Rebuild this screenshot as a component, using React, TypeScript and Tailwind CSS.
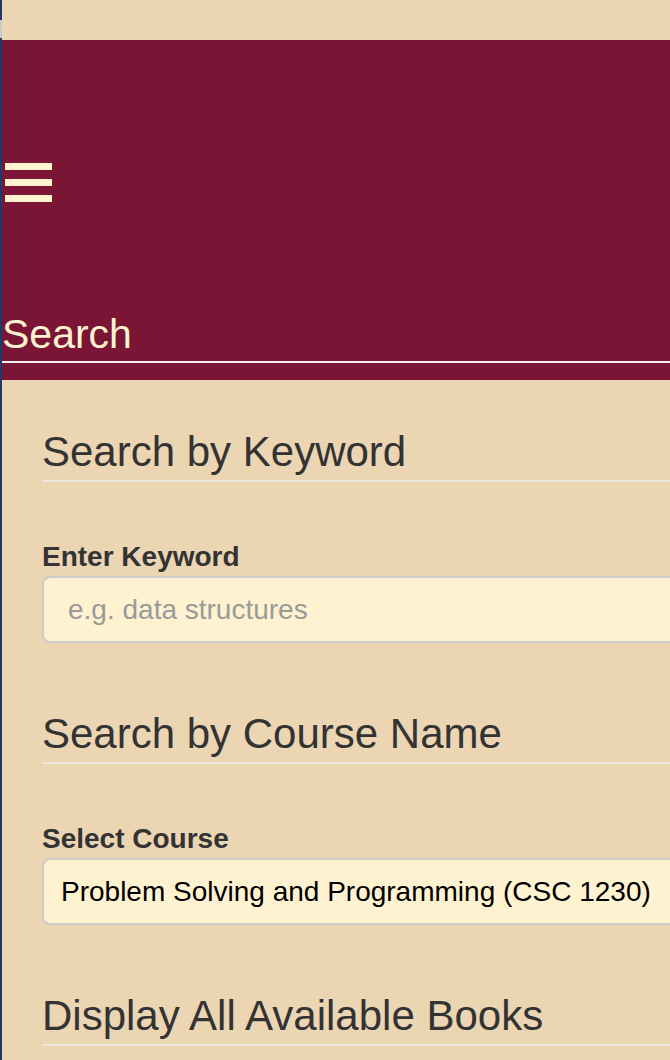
import React from 'react';

const sans = { fontFamily: '"Liberation Sans", Arial, Helvetica, sans-serif' };

function SectionHeading({ children }: { children: React.ReactNode }) {
  return (
    <h1 className="text-[42px] leading-[48px] font-normal text-[#333333] pb-[4px] border-b-2 border-[#ece5da]">
      {children}
    </h1>
  );
}

function FieldLabel({ children }: { children: React.ReactNode }) {
  return (
    <label className="block mt-[57px] mb-[1px] text-[28px] leading-[36px] font-bold text-[#333333]">
      {children}
    </label>
  );
}

export default function App() {
  return (
    <div className="w-[670px] h-[1060px] overflow-hidden flex bg-[#ebd5b3]" style={sans}>
      {/* desktop edge behind the browser window */}
      <div className="w-[2px] shrink-0 flex flex-col bg-[#1f3a66]">
        <div className="h-[20px]" />
        <div className="h-[18px] bg-[#c9c9c9]" />
      </div>

      <div className="w-[760px] shrink-0">
        <div className="h-[40px]" />

        <header className="bg-[#7b1536] pt-[123px] pb-[17px]">
          <button className="flex flex-col gap-[9px] ml-[3px]" aria-label="menu">
            <span className="block w-[47px] h-[7px] bg-[#fef2cf]" />
            <span className="block w-[47px] h-[7px] bg-[#fef2cf]" />
            <span className="block w-[47px] h-[7px] bg-[#fef2cf]" />
          </button>
          <div className="mt-[108px] pb-[3px] border-b-2 border-[#eeeeee]">
            <span className="text-[41px] leading-[48px] text-[#fef2cf]">Search</span>
          </div>
        </header>

        <main className="pl-[40px] pt-[48px]">
          <section>
            <SectionHeading>Search by Keyword</SectionHeading>
            <FieldLabel>Enter Keyword</FieldLabel>
            <input
              type="text"
              placeholder="e.g. data structures"
              className="w-full h-[67px] px-[24px] rounded-[8px] border-2 border-[#cccccc] bg-[#fef2d0] text-[28px] text-black placeholder:text-[#9a9a9a] outline-none"
            />
          </section>

          <section className="mt-[67px]">
            <SectionHeading>Search by Course Name</SectionHeading>
            <FieldLabel>Select Course</FieldLabel>
            <div className="w-full h-[67px] pl-[17px] flex items-center rounded-[8px] border-2 border-[#cccccc] bg-[#fef2d0] text-[28px] text-black">
              Problem Solving and Programming (CSC 1230)
            </div>
          </section>

          <section className="mt-[67px]">
            <SectionHeading>Display All Available Books</SectionHeading>
          </section>
        </main>
      </div>
    </div>
  );
}
